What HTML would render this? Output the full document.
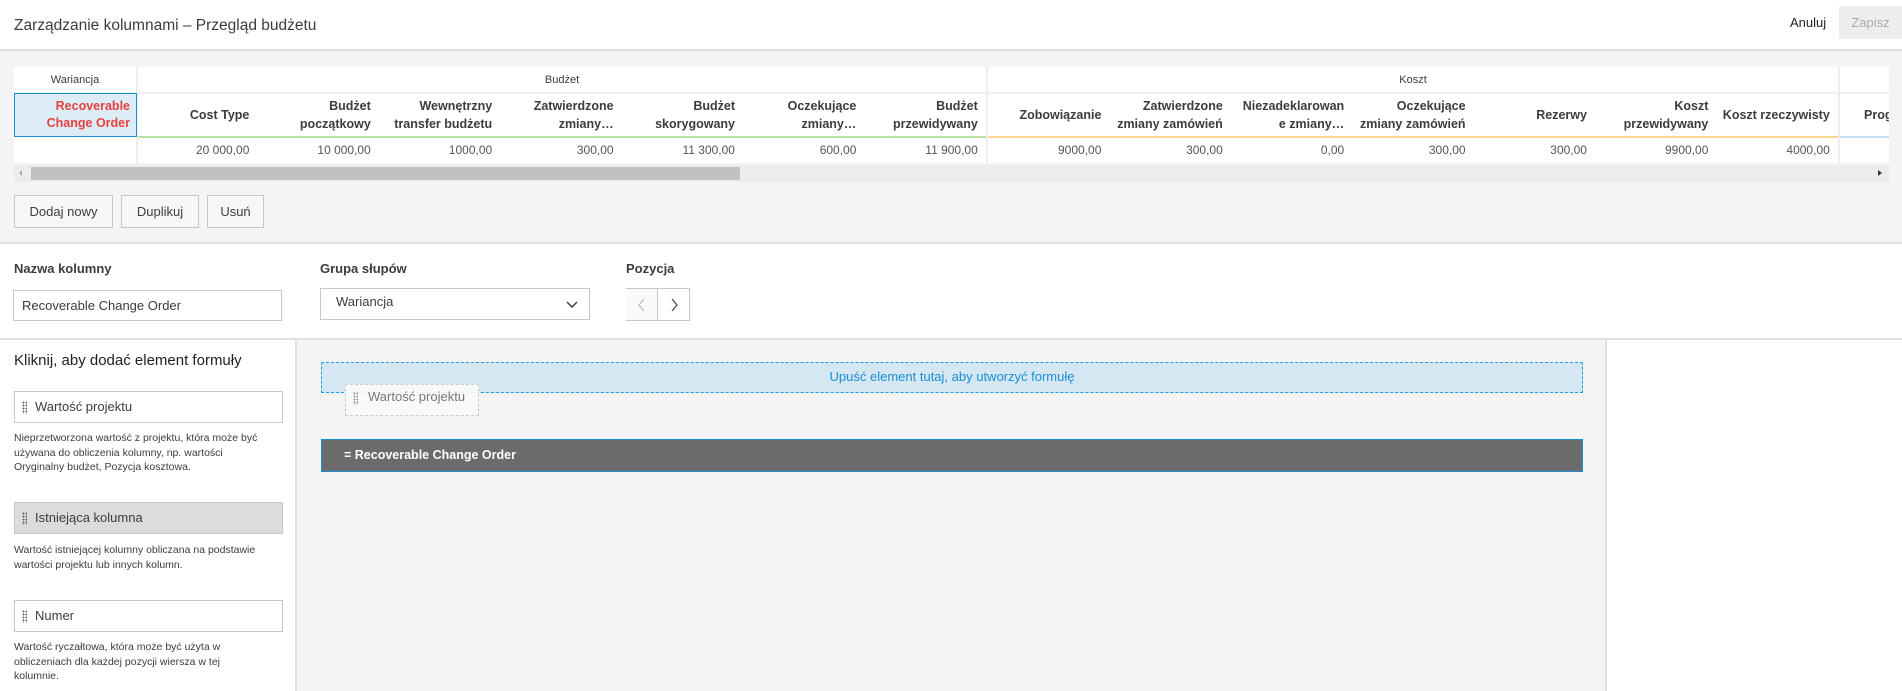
<!DOCTYPE html>
<html><head><meta charset="utf-8"><style>
*{box-sizing:border-box;margin:0;padding:0}
body{width:1902px;height:691px;overflow:hidden;background:#f4f4f4;font-family:"Liberation Sans",sans-serif;color:#3c3c3c;position:relative}
.a{position:absolute}
.hdr{left:0;top:0;width:1902px;height:51px;background:#fff;border-bottom:2px solid #e0e0e0}
.th{position:absolute;top:93px;height:44px;width:121.4px;text-align:right;padding-right:8px;font-size:12.5px;font-weight:bold;line-height:18px;display:flex;flex-direction:column;justify-content:center;white-space:nowrap;overflow:hidden;color:#3c3c3c}
.td{position:absolute;top:137px;height:26px;width:121.4px;text-align:right;padding-right:8px;font-size:12px;line-height:26px;color:#555}
.btn{position:absolute;top:195px;height:33px;border:1px solid #c8c8c8;background:#f7f7f7;font-size:13px;line-height:31px;text-align:center;color:#3c3c3c}
.lbl{position:absolute;font-size:13px;font-weight:bold;color:#3c3c3c}
.box{position:absolute;left:14px;width:269px;height:32px;border:1px solid #c8c8c8;background:#fff;font-size:13px;line-height:30px;padding-left:20px}
.grip{position:absolute;left:7px;top:9px;width:5px;height:13px;background-image:radial-gradient(circle,#666 0.9px,transparent 1.1px);background-size:3px 3px}
.desc{position:absolute;left:14px;width:290px;font-size:10.5px;line-height:14.5px;color:#3c3c3c;white-space:nowrap}
</style></head><body>
<div class="a hdr"></div>
<div class="a" style="left:14px;top:17px;font-size:15.5px;color:#3c3c3c">Zarządzanie kolumnami – Przegląd budżetu</div>
<div class="a" style="left:1790px;top:15px;font-size:13px;color:#222">Anuluj</div>
<div class="a" style="left:1839px;top:6px;width:63px;height:33px;background:#eee;color:#aaa;font-size:13px;line-height:33px;text-align:center">Zapisz</div>

<div class="a" style="left:14px;top:67px;width:1875px;height:96px;background:#fff"></div>
<div class="a" style="left:136px;top:67px;width:2px;height:96px;background:#eee"></div>
<div class="a" style="left:986px;top:67px;width:2px;height:96px;background:#eee"></div>
<div class="a" style="left:1838px;top:67px;width:2px;height:96px;background:#eee"></div>
<div class="a" style="left:14px;top:92px;width:1875px;height:2px;background:#f0f0f0"></div>
<div class="a" style="left:14px;top:67px;width:122px;height:26px;font-size:11px;line-height:26px;text-align:center">Wariancja</div>
<div class="a" style="left:138px;top:67px;width:848px;height:26px;font-size:11px;line-height:26px;text-align:center">Budżet</div>
<div class="a" style="left:988px;top:67px;width:850px;height:26px;font-size:11px;line-height:26px;text-align:center">Koszt</div>
<div class="a" style="left:14px;top:93px;width:123px;height:44px;background:#dcedf8;border:1.5px solid #1a8fd6;text-align:right;padding-right:6px;color:#e8403c;font-size:12.5px;font-weight:bold;line-height:17px;padding-top:4px">Recoverable<br>Change Order</div>
<div class="a" style="left:138px;top:136px;width:848px;height:1.5px;background:#b9e0a5"></div>
<div class="a" style="left:988px;top:136px;width:850px;height:1.5px;background:#fcd58e"></div>
<div class="a" style="left:1840px;top:136px;width:49px;height:1.5px;background:#c6dcef"></div>

<div class="th" style="left:136px"><span>Cost Type</span></div>
<div class="th" style="left:257.4px"><span>Budżet</span><span>początkowy</span></div>
<div class="th" style="left:378.8px"><span>Wewnętrzny</span><span>transfer budżetu</span></div>
<div class="th" style="left:500.2px"><span>Zatwierdzone</span><span>zmiany…</span></div>
<div class="th" style="left:621.6px"><span>Budżet</span><span>skorygowany</span></div>
<div class="th" style="left:743px"><span>Oczekujące</span><span>zmiany…</span></div>
<div class="th" style="left:864.4px"><span>Budżet</span><span>przewidywany</span></div>
<div class="th" style="left:988px"><span>Zobowiązanie</span></div>
<div class="th" style="left:1109.4px"><span>Zatwierdzone</span><span>zmiany zamówień</span></div>
<div class="th" style="left:1230.8px"><span>Niezadeklarowan</span><span>e zmiany…</span></div>
<div class="th" style="left:1352.2px"><span>Oczekujące</span><span>zmiany zamówień</span></div>
<div class="th" style="left:1473.6px"><span>Rezerwy</span></div>
<div class="th" style="left:1595px"><span>Koszt</span><span>przewidywany</span></div>
<div class="th" style="left:1716.4px"><span>Koszt rzeczywisty</span></div>
<div class="th" style="left:1840px;width:49px;text-align:left;padding-left:24px"><span>Prog</span></div>

<div class="td" style="left:136px">20 000,00</div>
<div class="td" style="left:257.4px">10 000,00</div>
<div class="td" style="left:378.8px">1000,00</div>
<div class="td" style="left:500.2px">300,00</div>
<div class="td" style="left:621.6px">11 300,00</div>
<div class="td" style="left:743px">600,00</div>
<div class="td" style="left:864.4px">11 900,00</div>
<div class="td" style="left:988px">9000,00</div>
<div class="td" style="left:1109.4px">300,00</div>
<div class="td" style="left:1230.8px">0,00</div>
<div class="td" style="left:1352.2px">300,00</div>
<div class="td" style="left:1473.6px">300,00</div>
<div class="td" style="left:1595px">9900,00</div>
<div class="td" style="left:1716.4px">4000,00</div>

<div class="a" style="left:14px;top:165px;width:1875px;height:17px;background:#ececec"></div>
<div class="a" style="left:31px;top:167px;width:709px;height:13px;background:#c1c1c1"></div>
<div class="a" style="left:19px;top:170px;width:0;height:0;border-top:3px solid transparent;border-bottom:3px solid transparent;border-right:3px solid #aaa"></div>
<div class="a" style="left:1878px;top:170px;width:0;height:0;border-top:3.5px solid transparent;border-bottom:3.5px solid transparent;border-left:4px solid #333"></div>

<div class="btn" style="left:14px;width:99px">Dodaj nowy</div>
<div class="btn" style="left:121px;width:78px">Duplikuj</div>
<div class="btn" style="left:207px;width:57px">Usuń</div>

<div class="a" style="left:0;top:242px;width:1902px;height:98px;background:#fff;border-top:2px solid #e0e0e0;border-bottom:2px solid #e0e0e0"></div>
<div class="lbl" style="left:14px;top:261px">Nazwa kolumny</div>
<div class="lbl" style="left:320px;top:261px">Grupa słupów</div>
<div class="lbl" style="left:626px;top:261px">Pozycja</div>
<div class="a" style="left:13px;top:290px;width:269px;height:31px;border:1px solid #c8c8c8;font-size:13px;line-height:29px;padding-left:8px">Recoverable Change Order</div>
<div class="a" style="left:320px;top:288px;width:270px;height:32px;border:1px solid #c8c8c8;font-size:13px;line-height:26px;padding-left:15px">Wariancja</div>
<svg class="a" style="left:565px;top:300px" width="14" height="10"><path d="M2 2l5 5 5-5" fill="none" stroke="#333" stroke-width="1.4"/></svg>
<div class="a" style="left:626px;top:288px;width:64px;height:33px;border:1px solid #c8c8c8"></div>
<div class="a" style="left:626px;top:289px;width:32px;height:31px;background:#fafafa;border-right:1px solid #c8c8c8"></div>
<svg class="a" style="left:636px;top:297px" width="12" height="16"><path d="M8 2l-5 6 5 6" fill="none" stroke="#bbb" stroke-width="1.2"/></svg>
<svg class="a" style="left:668px;top:297px" width="12" height="16"><path d="M4 2l5 6-5 6" fill="none" stroke="#444" stroke-width="1.2"/></svg>

<div class="a" style="left:0;top:340px;width:297px;height:351px;background:#fff;border-right:2px solid #e0e0e0"></div>
<div class="a" style="left:1605px;top:340px;width:297px;height:351px;background:#fff;border-left:2px solid #e0e0e0"></div>
<div class="a" style="left:14px;top:352px;font-size:15px;color:#222">Kliknij, aby dodać element formuły</div>
<div class="box" style="top:391px"><span class="grip"></span>Wartość projektu</div>
<div class="desc" style="top:431px">Nieprzetworzona wartość z projektu, która może być<br>używana do obliczenia kolumny, np. wartości<br>Oryginalny budżet, Pozycja kosztowa.</div>
<div class="box" style="top:502px;background:#dcdcdc"><span class="grip"></span>Istniejąca kolumna</div>
<div class="desc" style="top:543px">Wartość istniejącej kolumny obliczana na podstawie<br>wartości projektu lub innych kolumn.</div>
<div class="box" style="top:600px"><span class="grip"></span>Numer</div>
<div class="desc" style="top:640px">Wartość ryczałtowa, która może być użyta w<br>obliczeniach dla każdej pozycji wiersza w tej<br>kolumnie.</div>

<div class="a" style="left:321px;top:362px;width:1262px;height:31px;background:#d4e7f2;border:1.5px dashed #1a9fe0;color:#1a8fd6;font-size:13px;line-height:28px;text-align:center">Upuść element tutaj, aby utworzyć formułę</div>
<div class="a" style="left:345px;top:384px;width:134px;height:32px;border:1px dashed #ccc;background:rgba(250,250,250,0.9);font-size:13px;line-height:24px;padding-left:22px;color:#777"><span class="grip" style="top:7px;left:7px;opacity:.7"></span>Wartość projektu</div>
<div class="a" style="left:321px;top:439px;width:1262px;height:33px;background:#6b6b6b;border:1px solid #1a8fd6;color:#fff;font-size:12.5px;font-weight:bold;line-height:31px;padding-left:22px">= Recoverable Change Order</div>
</body></html>
